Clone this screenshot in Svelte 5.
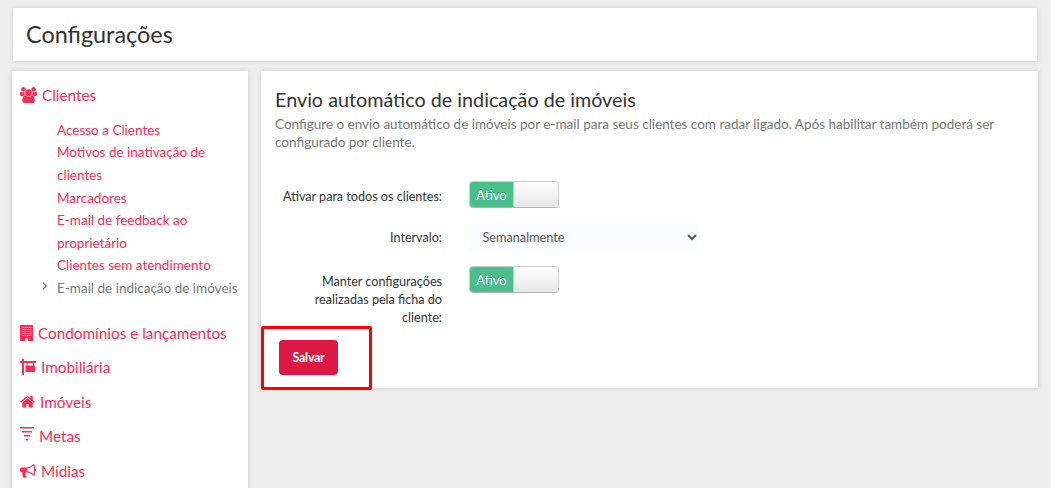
<script lang="ts">
  type Section = { icon: string; label: string };

  const clientLinks = [
    'Acesso a Clientes',
    'Motivos de inativação de clientes',
    'Marcadores',
    'E-mail de feedback ao proprietário',
    'Clientes sem atendimento',
    'E-mail de indicação de imóveis'
  ];

  const sections: Section[] = [
    { icon: 'building', label: 'Condomínios e lançamentos' },
    { icon: 'sign', label: 'Imobiliária' },
    { icon: 'home', label: 'Imóveis' },
    { icon: 'filter', label: 'Metas' },
    { icon: 'bullhorn', label: 'Mídias' }
  ];

  let current = $state('E-mail de indicação de imóveis');
  let enabled = $state(true);
  let keepSettings = $state(true);
  let interval = $state('Semanalmente');
</script>

{#snippet icon(name: string)}
  {#if name === 'group'}
    <svg class="icon" width="17" height="16" viewBox="-64 0 1920 1792">
      <path d="M529 896q-162 5-265 128h-134q-82 0-138-40.5t-56-118.5q0-353 124-353 6 0 43.5 21t97.5 42.5 119 21.5q67 0 133-23-5 37-5 66 0 139 81 256zm1071 637q0 120-73 189.5t-194 69.5h-874q-121 0-194-69.5t-73-189.5q0-53 3.5-103.5t14-109 26.5-108.5 43-97.5 62-81 85.5-53.5 111.5-20q10 0 43 21.5t73 48 107 48 135 21.5 135-21.5 107-48 73-48 43-21.5q61 0 111.5 20t85.5 53.5 62 81 43 97.5 26.5 108.5 14 109 3.5 103.5zm-1024-1277q0 106-75 181t-181 75-181-75-75-181 75-181 181-75 181 75 75 181zm704 384q0 159-112.5 271.5t-271.5 112.5-271.5-112.5-112.5-271.5 112.5-271.5 271.5-112.5 271.5 112.5 112.5 271.5zm576 225q0 78-56 118.5t-138 40.5h-134q-103-123-265-128 81-117 81-256 0-29-5-66 66 23 133 23 59 0 119-21.5t97.5-42.5 43.5-21q124 0 124 353zm-128-609q0 106-75 181t-181 75-181-75-75-181 75-181 181-75 181 75 75 181z" />
    </svg>
  {:else if name === 'building'}
    <svg class="icon" width="13" height="16" viewBox="0 0 13 16">
      <path d="M.5 0h12q.5 0 .5.500v15q0 .500-.500.500H8v-2.500H5V16H.5Q0 16 0 15.500V.5Q0 0 .5 0z" />
      <path class="windows" d="M2.500 2.500h9M2.500 4.500h9M2.500 6.500h9M2.500 8.500h9M2.500 10.500h9" />
    </svg>
  {:else if name === 'sign'}
    <svg class="icon" width="16" height="16" viewBox="0 0 16 16">
      <path d="M2 0h2v2h12v2H4v12H2V4H0V2h2zM5.500 6.500H15V13H5.500zM6.500 4h1v3h-1zM13 4h1v3h-1z" />
    </svg>
  {:else if name === 'home'}
    <svg class="icon" width="15" height="16" viewBox="64 96 1664 1664">
      <path d="M1472 992v480q0 26-19 45t-45 19h-384v-384h-256v384h-384q-26 0-45-19t-19-45v-480q0-1 .5-3t.5-3l575-474 575 474q1 2 1 6zm223-69l-62 74q-8 9-21 11h-3q-13 0-21-7l-692-577-692 577q-12 8-24 7-13-2-21-11l-62-74q-8-10-7-23.500t11-21.500l719-599q32-26 76-26t76 26l244 204v-195q0-14 9-23t23-9h192q14 0 23 9t9 23v408l219 182q10 8 11 21.500t-7 23.500z" />
    </svg>
  {:else if name === 'filter'}
    <svg class="icon raised" width="14" height="14" viewBox="0 0 14 14">
      <path d="M0 0h14v1.500H0zM2 4h10v1.500H2zM4 8h6v1.500H4zM6 12h2v1.500H6z" />
    </svg>
  {:else}
    <svg class="icon" width="16" height="16" viewBox="0 0 1792 1792">
      <path d="M1664 640q53 0 90.500 37.500t37.500 90.500-37.500 90.500-90.500 37.500v384q0 52-38 90t-90 38q-417-347-812-380-58 19-91 66t-31 100.500 40 92.500q-20 33-23 65.500t6 58 33.500 55 48 50 61.500 50.500q-29 58-111.500 83t-168.500 11.500-132-55.500q-7-23-29.500-87.500t-32-94.500-23-89-15-101 3.500-98.500 22-110.500h-122q-66 0-113-47t-47-113v-192q0-66 47-113t113-47h480q435 0 896-384 52 0 90 38t38 90v384zm-128 604v-954q-394 302-768 343v270q377 42 768 341z" />
    </svg>
  {/if}
{/snippet}

{#snippet toggle(on: boolean, flip: () => void)}
  <button class="switch" class:off={!on} type="button" onclick={flip}>
    <span class="state">{on ? 'Ativo' : 'Inativo'}</span>
    <span class="knob"></span>
  </button>
{/snippet}

<div class="page">
  <header>
    <h1>Configurações</h1>
  </header>

  <div class="columns">
    <nav>
      <a class="section" href="#clientes">{@render icon('group')}<span>Clientes</span></a>
      <ul>
        {#each clientLinks as link}
          <li class:current={link === current}>
            {#if link === current}
              <svg class="chevron" width="6" height="8" viewBox="0 0 6 8"><path d="M1 .8 4.400 4 1 7.200" /></svg>
            {/if}
            <a href="#clientes" onclick={() => (current = link)}>{link}</a>
          </li>
        {/each}
      </ul>
      {#each sections as section}
        <a class="section" href="#{section.icon}">{@render icon(section.icon)}<span>{section.label}</span></a>
      {/each}
    </nav>

    <main>
      <h2>Envio automático de indicação de imóveis</h2>
      <p>Configure o envio automático de imóveis por e-mail para seus clientes com radar ligado. Após habilitar também poderá ser configurado por cliente.</p>

      <form>
        <div class="field first">
          <span class="label">Ativar para todos os clientes:</span>
          {@render toggle(enabled, () => (enabled = !enabled))}
        </div>
        <div class="field interval">
          <label class="label" for="interval">Intervalo:</label>
          <select id="interval" bind:value={interval}>
            <option>Diariamente</option>
            <option>Semanalmente</option>
            <option>Mensalmente</option>
          </select>
        </div>
        <div class="field">
          <span class="label">Manter configurações realizadas pela ficha do cliente:</span>
          {@render toggle(keepSettings, () => (keepSettings = !keepSettings))}
        </div>
        <div class="highlight">
          <button class="save" type="button">Salvar</button>
        </div>
      </form>
    </main>
  </div>
</div>

<style>
  :global(body) {
    background: #eee;
    font-family: Lato, 'Liberation Sans', sans-serif;
    overflow: hidden;
  }

  .page {
    box-sizing: border-box;
    height: 488px;
    padding: 8px 13px 0 12px;
    overflow: hidden;
  }

  header,
  nav,
  main {
    box-sizing: border-box;
    background: #fff;
    box-shadow: 0 0 5px rgba(0, 0, 0, 0.16);
  }

  header {
    height: 53px;
    margin: 0 1px 10px;
    padding: 11px 13px 0;
  }

  h1 {
    margin: 0;
    color: #333;
    font-size: 23.4px;
    font-weight: 400;
    line-height: 30px;
  }

  .columns {
    display: flex;
    align-items: flex-start;
    gap: 13px;
  }

  nav {
    width: 236px;
    height: 440px;
    flex: none;
    padding: 7px 8px 0;
  }

  a {
    color: #fc2d55;
    text-decoration: none;
  }

  .section {
    display: flex;
    align-items: center;
    gap: 5px;
    height: 34.4px;
    font-size: 15.3px;
    white-space: nowrap;
  }

  .icon {
    flex: none;
    fill: #fc2d55;
  }

  .raised {
    margin-bottom: 5px;
  }

  .windows {
    fill: none;
    stroke: #fff;
    stroke-dasharray: 1.200 0.8;
  }

  ul {
    list-style: none;
    margin: 6.5px 0 16.5px;
    padding: 0 0 0 37px;
    font-size: 13.5px;
    line-height: 22.55px;
  }

  li {
    position: relative;
  }

  .current a {
    color: #777;
    white-space: nowrap;
  }

  .chevron {
    position: absolute;
    left: -15px;
    top: 5px;
    fill: none;
    stroke: #777;
    stroke-width: 1.2;
  }

  main {
    flex: 1;
    height: 317px;
    padding: 16px 14px 0;
  }

  h2 {
    margin: 0;
    color: #333;
    font-size: 19.75px;
    font-weight: 400;
    line-height: 26px;
  }

  p {
    margin: 2px 0 0;
    color: #777;
    font-size: 13.5px;
    line-height: 18px;
  }

  .field {
    display: flex;
    align-items: flex-start;
    gap: 27px;
  }

  .first {
    margin-top: 30px;
    height: 41px;
  }

  .interval {
    height: 44px;
  }

  .label {
    width: 167px;
    padding-top: 7px;
    color: #333;
    font-size: 12.6px;
    line-height: 18px;
    text-align: right;
  }

  .field:nth-child(3) {
    height: 60px;
  }

  .switch {
    display: flex;
    box-sizing: border-box;
    width: 90px;
    height: 27px;
    padding: 0;
    overflow: hidden;
    border: 1px solid #ccc;
    border-bottom-color: #b3b3b3;
    border-radius: 4px;
    background: none;
    font-family: inherit;
    cursor: pointer;
  }

  .state {
    width: 43px;
    background: #49bf8c;
    color: #fff;
    font-size: 13px;
    line-height: 26px;
    text-shadow: 0 -1px 0 rgba(0, 0, 0, 0.25);
  }

  .knob {
    flex: 1;
    align-self: stretch;
    border-left: 1px solid #ccc;
    background: linear-gradient(#fff, #e6e6e6);
  }

  .off .state {
    background: #999;
  }

  select {
    width: 231px;
    height: 30px;
    padding: 0 0 1px 9.5px;
    border: 0;
    background-color: #fbfcff;
    color: #555;
    font-family: inherit;
    font-size: 12.7px;
  }

  .highlight {
    box-sizing: border-box;
    width: 111px;
    height: 64px;
    margin: 0 0 0 -14px;
    padding: 11px 15px;
    border: 3px solid #f00;
    border-radius: 2px;
  }

  .save {
    width: 59px;
    height: 35px;
    padding: 0 0 1px;
    border: 0;
    border-radius: 4px;
    background: #dc1943;
    color: #fff;
    font-family: inherit;
    font-size: 12.5px;
    font-weight: 700;
    letter-spacing: -0.3px;
    cursor: pointer;
  }
</style>
